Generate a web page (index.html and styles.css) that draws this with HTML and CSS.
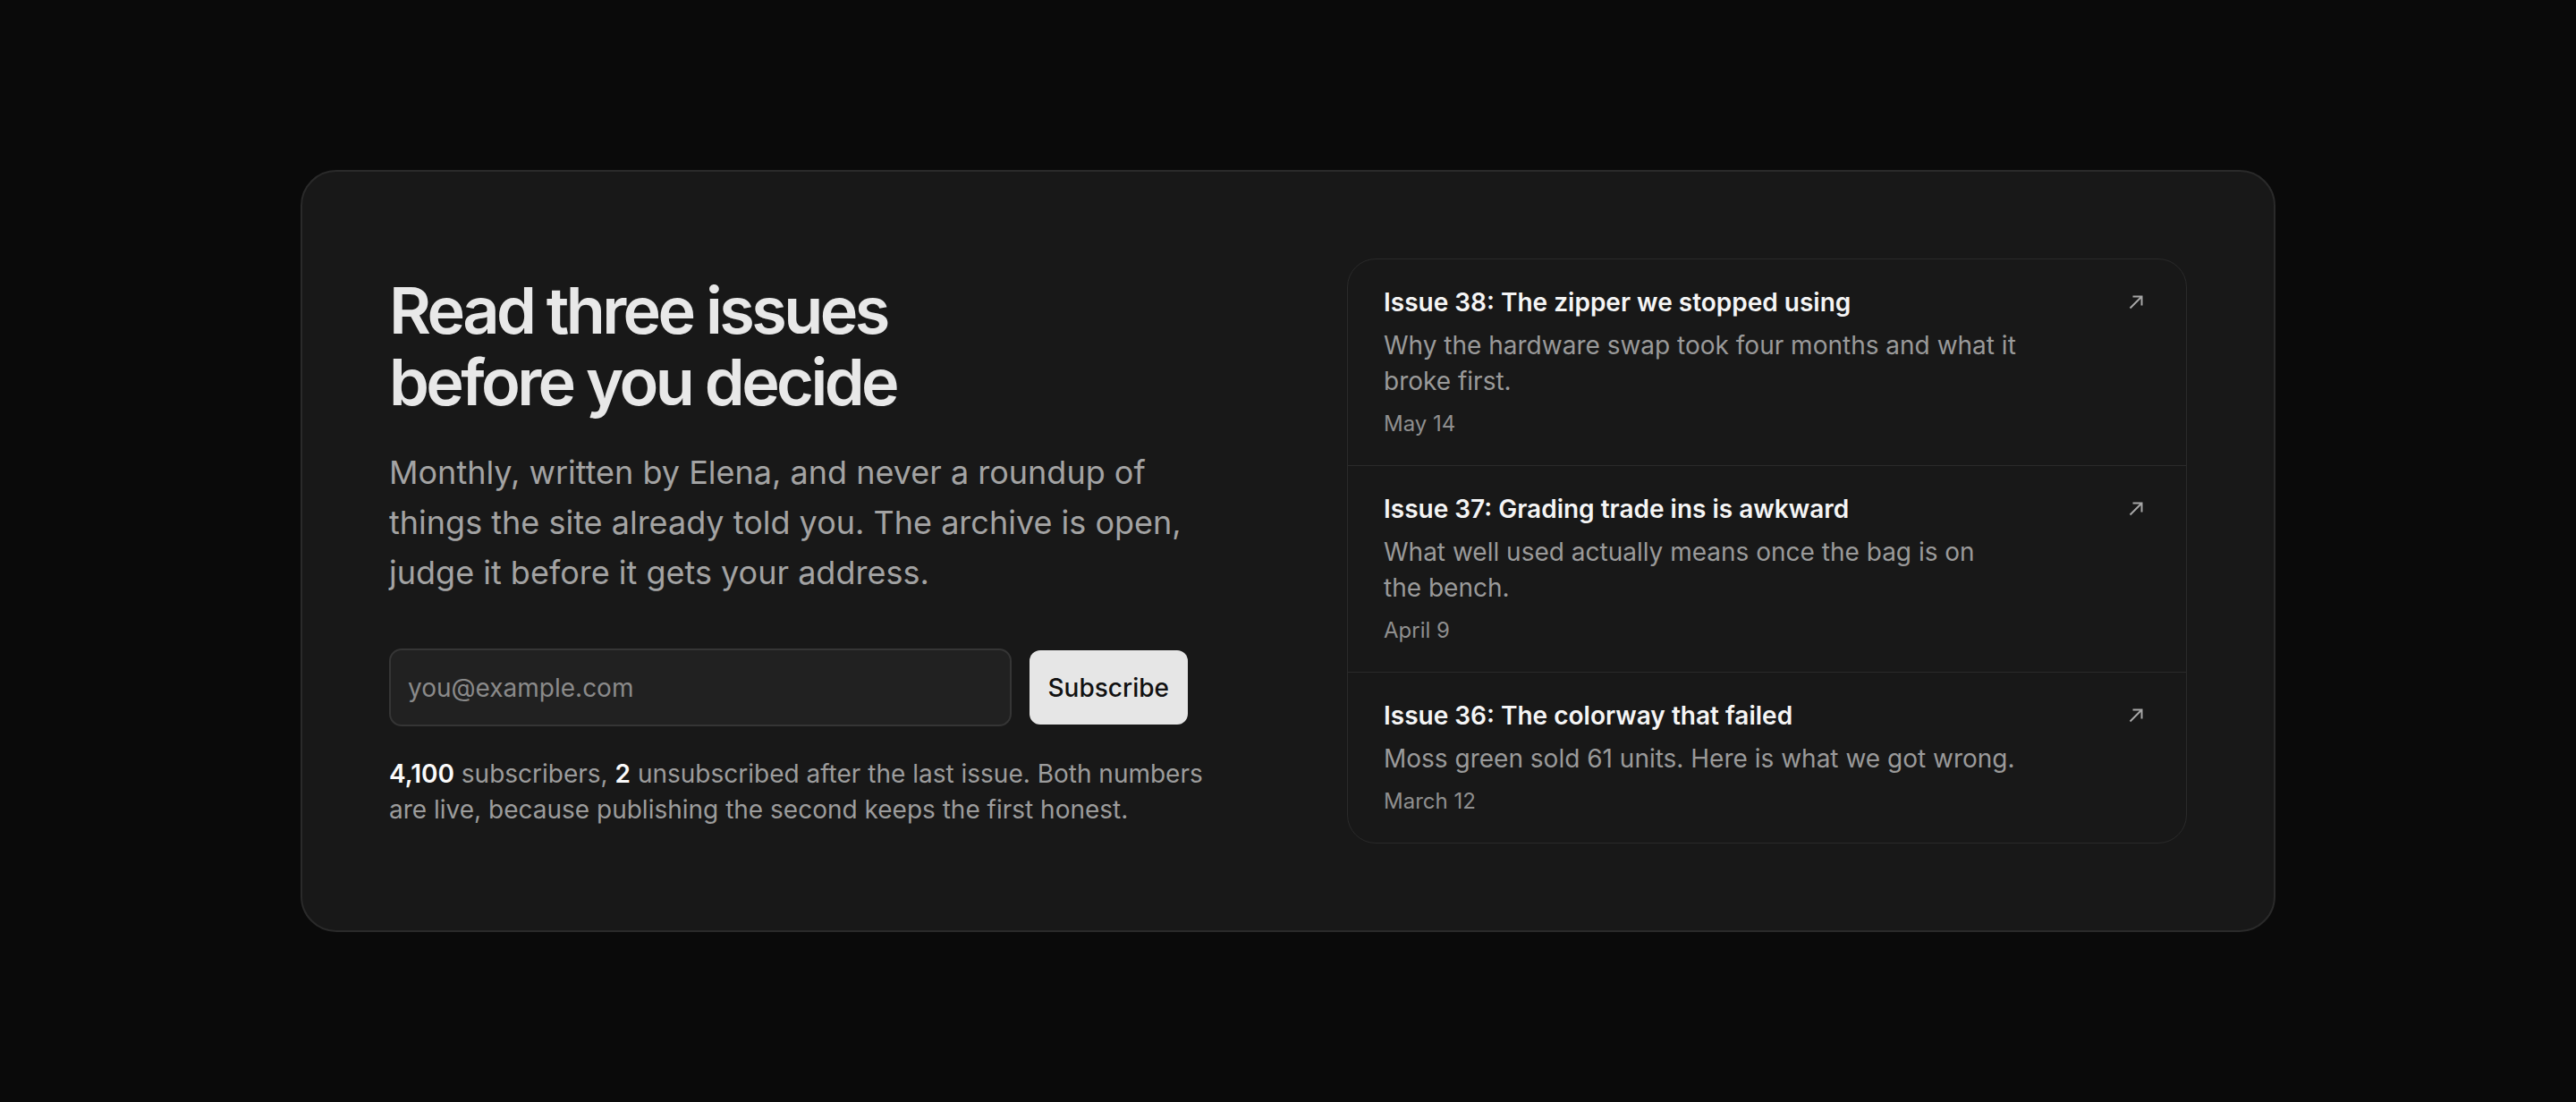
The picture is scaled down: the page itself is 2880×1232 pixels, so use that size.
FILE: index.html
```html
<!DOCTYPE html>
<html lang="en">
<head>
	<meta charset="UTF-8">
	<title>Newsletter</title>
	<link rel="stylesheet" href="styles.css">
</head>
<body>
	<section class="card">
		<div class="pitch">
			<h1 class="pitch-title">Read three issues<br>before you decide</h1>
			<p class="pitch-lead">Monthly, written by Elena, and never a roundup of things the site already told you. The archive is open, judge it before it gets your address.</p>
			<form class="signup" onsubmit="return false;">
				<input class="signup-input" type="email" placeholder="you@example.com">
				<button class="signup-btn" type="submit">Subscribe</button>
			</form>
			<p class="stats"><b>4,100</b> subscribers, <b>2</b> unsubscribed after the last issue. Both numbers are live, because publishing the second keeps the first honest.</p>
		</div>
		<div class="issues">
			<a class="issue" href="#">
				<div class="issue-body">
					<h3 class="issue-title">Issue 38: The zipper we stopped using</h3>
					<p class="issue-desc">Why the hardware swap took four months and what it broke first.</p>
					<span class="issue-date">May 14</span>
				</div>
				<svg class="issue-arrow" viewBox="0 0 16 16"><path d="M4.5 1.5h10v10M1.5 14.5l13-13"/></svg>
			</a>
			<a class="issue" href="#">
				<div class="issue-body">
					<h3 class="issue-title">Issue 37: Grading trade ins is awkward</h3>
					<p class="issue-desc">What well used actually means once the bag is on the bench.</p>
					<span class="issue-date">April 9</span>
				</div>
				<svg class="issue-arrow" viewBox="0 0 16 16"><path d="M4.5 1.5h10v10M1.5 14.5l13-13"/></svg>
			</a>
			<a class="issue" href="#">
				<div class="issue-body">
					<h3 class="issue-title">Issue 36: The colorway that failed</h3>
					<p class="issue-desc">Moss green sold 61 units. Here is what we got wrong.</p>
					<span class="issue-date">March 12</span>
				</div>
				<svg class="issue-arrow" viewBox="0 0 16 16"><path d="M4.5 1.5h10v10M1.5 14.5l13-13"/></svg>
			</a>
		</div>
	</section>
</body>
</html>
```

FILE: styles.css
```css
*{box-sizing: border-box; margin: 0; padding: 0;}
body{
	min-height: 100vh;
	background: #0a0a0a;
	font-family: Inter, "Noto Sans", sans-serif;
	display: flex;
	align-items: center;
	justify-content: center;
}
.card{
	width: 2208px;
	background: #181818;
	border: 2px solid #2a2a2a;
	border-radius: 40px;
	padding: 97px;
	display: grid;
	grid-template-columns: 1fr 1fr;
	gap: 132px;
	align-items: center;
}

/* left side */
.pitch-title{
	font-size: 72px;
	line-height: 80px;
	font-weight: 600;
	letter-spacing: -0.05em;
	color: #e8e8e8;
}
.pitch-lead{
	margin-top: 33px;
	max-width: 900px;
	font-size: 36px;
	line-height: 56px;
	color: #a3a3a3;
}
.signup{
	margin-top: 57px;
	max-width: 893px;
	display: flex;
	align-items: center;
	gap: 20px;
}
.signup-input{
	flex: 1;
	height: 87px;
	padding: 0 19px;
	background: #212121;
	border: 2px solid #353535;
	border-radius: 14px;
	font: 28px Inter, sans-serif;
	color: #e8e8e8;
	outline: none;
}
.signup-input::placeholder{color: #8a8a8a;}
.signup-btn{
	height: 83px;
	padding: 0 21px;
	background: #e6e6e6;
	border: none;
	border-radius: 12px;
	font: 500 28px Inter, sans-serif;
	color: #111;
	cursor: pointer;
}
.stats{
	margin-top: 33px;
	font-size: 28px;
	line-height: 40px;
	color: #9c9c9c;
}
.stats b{
	font-weight: 600;
	color: #fafafa;
}

/* right side */
.issues{
	border: 1px solid #2a2a2a;
	border-radius: 32px;
	overflow: hidden;
}
.issue{
	display: flex;
	padding: 28px 48px 30px 40px;
	text-decoration: none;
	border-bottom: 1px solid #2a2a2a;
}
.issue:last-child{border-bottom: none;}
.issue-body{flex: 1;}
.issue-title{
	font-size: 28px;
	line-height: 40px;
	font-weight: 600;
	color: #f5f5f5;
}
.issue-desc{
	margin-top: 8px;
	max-width: 708px;
	font-size: 28px;
	line-height: 40px;
	color: #9a9a9a;
}
.issue-date{
	display: block;
	margin-top: 12px;
	font-size: 24px;
	line-height: 32px;
	color: #8f8f8f;
}
.issue-arrow{
	flex-shrink: 0;
	width: 16px;
	height: 16px;
	margin-top: 12px;
	fill: none;
	stroke: #a6a6a6;
	stroke-width: 2;
}
```
